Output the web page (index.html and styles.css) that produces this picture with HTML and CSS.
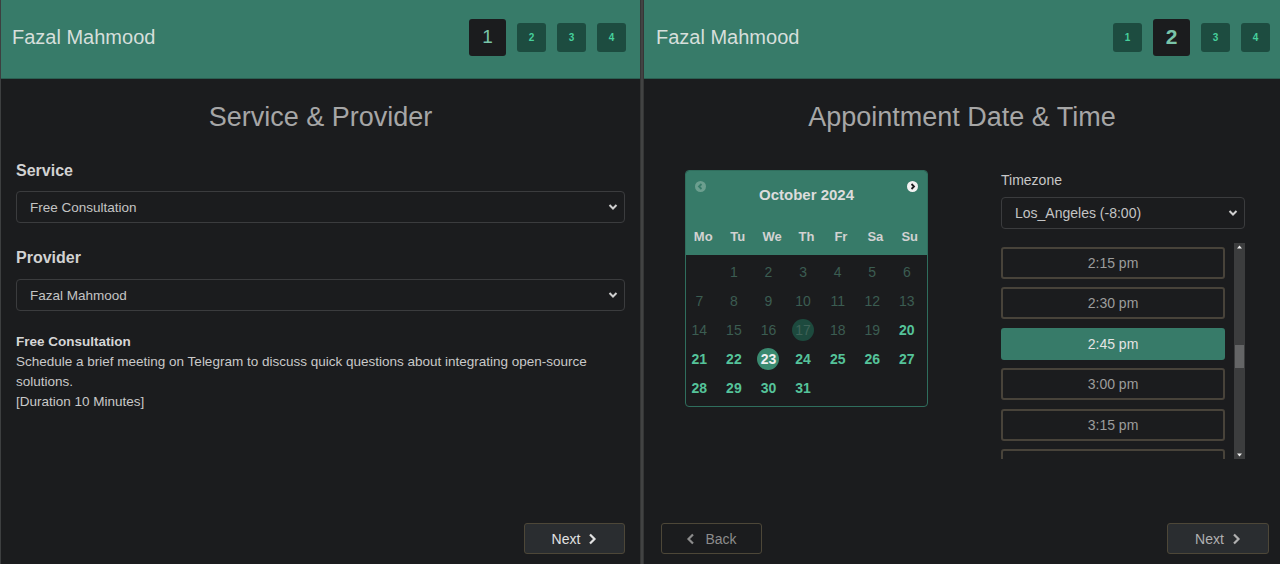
FILE: index.html
```html
<!DOCTYPE html>
<html lang="en">
<head>
<meta charset="utf-8">
<title>Booking</title>
<link rel="stylesheet" href="styles.css">
</head>
<body>
<div class="app">
  <section class="panel panel-left">
    <header class="topbar">
      <div class="brand">Fazal Mahmood</div>
      <div class="steps">
        <div class="step step-active">1</div>
        <div class="step">2</div>
        <div class="step">3</div>
        <div class="step">4</div>
      </div>
    </header>
    <div class="content">
      <h1 class="title">Service &amp; Provider</h1>
      <div class="form">
        <label class="label label-service">Service</label>
        <div class="select select-service">
          <span>Free Consultation</span>
          <svg class="chev" width="10" height="8" viewBox="0 0 10 8"><path d="M1.5 2 L5 5.5 L8.5 2" fill="none" stroke="#cfcfcf" stroke-width="2"/></svg>
        </div>
        <label class="label label-provider">Provider</label>
        <div class="select select-provider">
          <span>Fazal Mahmood</span>
          <svg class="chev" width="10" height="8" viewBox="0 0 10 8"><path d="M1.5 2 L5 5.5 L8.5 2" fill="none" stroke="#cfcfcf" stroke-width="2"/></svg>
        </div>
        <div class="desc">
          <div class="desc-title">Free Consultation</div>
          <div>Schedule a brief meeting on Telegram to discuss quick questions about integrating open-source solutions.</div>
          <div>[Duration 10 Minutes]</div>
        </div>
      </div>
      <div class="actions actions-end">
        <button class="btn btn-next">Next
          <svg width="10" height="12" viewBox="0 0 10 12"><path d="M3 1.5 L7.5 6 L3 10.5" fill="none" stroke="currentColor" stroke-width="2.2"/></svg>
        </button>
      </div>
    </div>
  </section>

  <div class="divider"></div>

  <section class="panel panel-right">
    <header class="topbar">
      <div class="brand">Fazal Mahmood</div>
      <div class="steps">
        <div class="step">1</div>
        <div class="step step-active step-bold">2</div>
        <div class="step">3</div>
        <div class="step">4</div>
      </div>
    </header>
    <div class="content">
      <h1 class="title">Appointment Date &amp; Time</h1>
      <div class="dt">
        <div class="cal">
          <div class="cal-head">
            <div class="nav nav-prev"><svg width="11" height="11" viewBox="0 0 11 11"><circle cx="5.5" cy="5.5" r="5.5" fill="#6c9f8f"/><path d="M6.5 3 L4 5.5 L6.5 8" fill="none" stroke="#387c6a" stroke-width="1.8"/></svg></div>
            <div class="cal-title">October 2024</div>
            <div class="nav nav-next"><svg width="11" height="11" viewBox="0 0 11 11"><circle cx="5.5" cy="5.5" r="5.5" fill="#f2f2f2"/><path d="M4.5 3 L7 5.5 L4.5 8" fill="none" stroke="#1c1d1f" stroke-width="1.8"/></svg></div>
          </div>
          <div class="cal-days">
            <span>Mo</span><span>Tu</span><span>We</span><span>Th</span><span>Fr</span><span>Sa</span><span>Su</span>
          </div>
          <div class="cal-grid">
            <span></span><span class="off">1</span><span class="off">2</span><span class="off">3</span><span class="off">4</span><span class="off">5</span><span class="off">6</span>
            <span class="off">7</span><span class="off">8</span><span class="off">9</span><span class="off">10</span><span class="off">11</span><span class="off">12</span><span class="off">13</span>
            <span class="off">14</span><span class="off">15</span><span class="off">16</span><span class="off today"><i>17</i></span><span class="off">18</span><span class="off">19</span><span class="on">20</span>
            <span class="on">21</span><span class="on">22</span><span class="on sel"><i>23</i></span><span class="on">24</span><span class="on">25</span><span class="on">26</span><span class="on">27</span>
            <span class="on">28</span><span class="on">29</span><span class="on">30</span><span class="on">31</span><span></span><span></span><span></span>
          </div>
        </div>
        <div class="times">
          <div class="tz-label">Timezone</div>
          <div class="select select-tz">
            <span>Los_Angeles (-8:00)</span>
            <svg class="chev" width="10" height="8" viewBox="0 0 10 8"><path d="M1.5 2 L5 5.5 L8.5 2" fill="none" stroke="#cfcfcf" stroke-width="2"/></svg>
          </div>
          <div class="slots-wrap">
            <div class="slots">
              <div class="slot">2:15 pm</div>
              <div class="slot">2:30 pm</div>
              <div class="slot slot-sel">2:45 pm</div>
              <div class="slot">3:00 pm</div>
              <div class="slot">3:15 pm</div>
              <div class="slot"></div>
            </div>
            <div class="sbar">
              <svg width="11" height="8" viewBox="0 0 11 8"><path d="M3 5.5 L5.5 2.5 L8 5.5 Z" fill="#eeeeee"/></svg>
              <div class="sbar-track"><div class="sbar-thumb"></div></div>
              <svg width="11" height="8" viewBox="0 0 11 8"><path d="M3 2.5 L5.5 5.5 L8 2.5 Z" fill="#eeeeee"/></svg>
            </div>
          </div>
        </div>
      </div>
      <div class="actions actions-between">
        <button class="btn btn-back">
          <svg width="10" height="12" viewBox="0 0 10 12"><path d="M7 1.5 L2.5 6 L7 10.5" fill="none" stroke="currentColor" stroke-width="2.2"/></svg>
          Back</button>
        <button class="btn btn-next btn-next-dim">Next
          <svg width="10" height="12" viewBox="0 0 10 12"><path d="M3 1.5 L7.5 6 L3 10.5" fill="none" stroke="currentColor" stroke-width="2.2"/></svg>
        </button>
      </div>
    </div>
  </section>
</div>
</body>
</html>
```

FILE: styles.css
```css
* { box-sizing: border-box; }
html, body { margin: 0; padding: 0; }
body {
  background: #1b1c1e;
  font-family: "Liberation Sans", Arial, sans-serif;
  color: #d0d0d0;
  width: 1280px;
  height: 564px;
  overflow: hidden;
}
.app { display: flex; height: 564px; }
.panel { display: flex; flex-direction: column; height: 564px; background: #1b1c1e; }
.panel-left { width: 640px; border-left: 1px solid #3d3f40; }
.panel-right { flex: 1; }
.divider { width: 4px; background: #424343; border-left: 1px solid #353636; border-right: 1px solid #353636; }

.topbar {
  height: 79px;
  background: #377b69;
  border-bottom: 1px solid #2b5f51;
  display: flex;
  align-items: center;
  justify-content: space-between;
}
.panel-left .topbar { padding: 0 14px 4px 11px; }
.panel-right .topbar { padding: 0 10px 4px 12px; }
.brand { font-size: 20px; color: #d6dfdb; }
.steps { display: flex; align-items: center; gap: 11px; }
.step {
  width: 29px; height: 29px;
  border-radius: 3px;
  background: #1d4c40;
  color: #46d09c;
  font-weight: bold;
  font-size: 10px;
  display: flex; align-items: center; justify-content: center;
}
.step-active {
  width: 37px; height: 37px;
  background: #1b1c1e;
  color: #79c4a9;
  font-size: 19px;
  font-weight: normal;
}
.step-bold { font-weight: bold; font-size: 21px; }

.content { flex: 1; display: flex; flex-direction: column; }
.title {
  margin: 21px 0 0;
  text-align: center;
  font-weight: normal;
  font-size: 27px;
  line-height: 34px;
  color: #a6a6a6;
}
.form { padding: 0 15px; }
.label { display: block; font-weight: bold; font-size: 16px; line-height: 20px; color: #d2d2d2; }
.label-service { margin-top: 27px; }
.label-provider { margin-top: 25px; }
.select {
  height: 32px;
  border: 1px solid #3b3c3e;
  border-radius: 4px;
  display: flex;
  align-items: center;
  justify-content: space-between;
  padding: 0 6px 0 13px;
  font-size: 13.5px;
  color: #c4c4c4;
}
.select-service { margin-top: 10px; }
.select-provider { margin-top: 11px; }
.chev { display: block; }
.desc { margin-top: 21px; font-size: 13.5px; line-height: 20px; color: #c9c9c9; }
.desc-title { font-weight: bold; color: #d6d6d6; }

.actions { margin-top: auto; display: flex; padding-bottom: 10px; }
.actions-end { justify-content: flex-end; padding-right: 15px; }
.actions-between { justify-content: space-between; padding: 0 11px 10px 17px; }
.btn {
  width: 101px; height: 31px;
  border: 1px solid #4d4738;
  border-radius: 3px;
  background: #2a2d30;
  color: #e2e2e2;
  font-family: "Liberation Sans", Arial, sans-serif;
  font-size: 14px;
  display: flex; align-items: center; justify-content: center;
  gap: 7px;
  padding: 0;
}
.btn svg { display: block; }
.btn-back { background: #1b1c1e; color: #8c8c8c; gap: 9px; }
.btn-next-dim { color: #b0b0b0; width: 102px; }

.dt { display: flex; padding-left: 41px; margin-top: 36px; gap: 73px; align-items: flex-start; }
.cal {
  width: 243px;
  border: 1px solid #2f6e5d;
  border-radius: 4px;
  overflow: hidden;
}
.cal-head {
  height: 47px;
  background: #377b69;
  display: flex;
  justify-content: space-between;
  align-items: flex-start;
  padding: 0 9px;
}
.nav { margin-top: 10px; }
.nav svg { display: block; }
.cal-title { margin-top: 14px; font-weight: bold; font-size: 15px; line-height: 20px; color: #dcdcdc; }
.cal-days {
  height: 37px;
  background: #377b69;
  display: grid;
  grid-template-columns: repeat(7, 1fr);
  align-items: center;
  text-align: center;
  font-weight: bold;
  font-size: 13px;
  color: #d2d2d2;
}
.cal-grid {
  display: grid;
  grid-template-columns: repeat(7, 34.6px);
  grid-auto-rows: 29px;
  margin-left: -4px;
  padding: 2px 0 4px;
  font-size: 14px;
  text-align: center;
}
.cal-grid span { display: flex; align-items: center; justify-content: center; }
.cal-grid i { font-style: normal; width: 22px; height: 22px; border-radius: 50%; display: flex; align-items: center; justify-content: center; }
.off { color: #3b5d52; }
.on { color: #55c39a; font-weight: bold; }
.today i { background: #1d4a3e; color: #3f6358; }
.sel i { background: #3a8a70; color: #f0f0f0; }

.times { width: 244px; }
.tz-label { font-size: 14px; line-height: 18px; color: #c8c8c8; margin-top: 1px; }
.select-tz { margin-top: 8px; padding-left: 13px; font-size: 14px; }
.slots-wrap { display: flex; margin-top: 14px; height: 216px; gap: 9px; }
.slots { flex: 1; overflow: hidden; padding-top: 4px; display: flex; flex-direction: column; gap: 8.4px; }
.slot {
  flex: none;
  height: 32px;
  border: 2px solid #48433a;
  border-radius: 3px;
  display: flex; align-items: center; justify-content: center;
  font-size: 14px;
  color: #9c9c9c;
}
.slot-sel { background: #377b69; border-color: #377b69; color: #e4e4e4; }
.sbar { width: 11px; background: #3c3d3e; display: flex; flex-direction: column; }
.sbar svg { display: block; flex: none; }
.sbar-track { flex: 1; padding-top: 94px; }
.sbar-thumb { width: 9px; margin-left: 1px; height: 23px; background: #646566; }
```
